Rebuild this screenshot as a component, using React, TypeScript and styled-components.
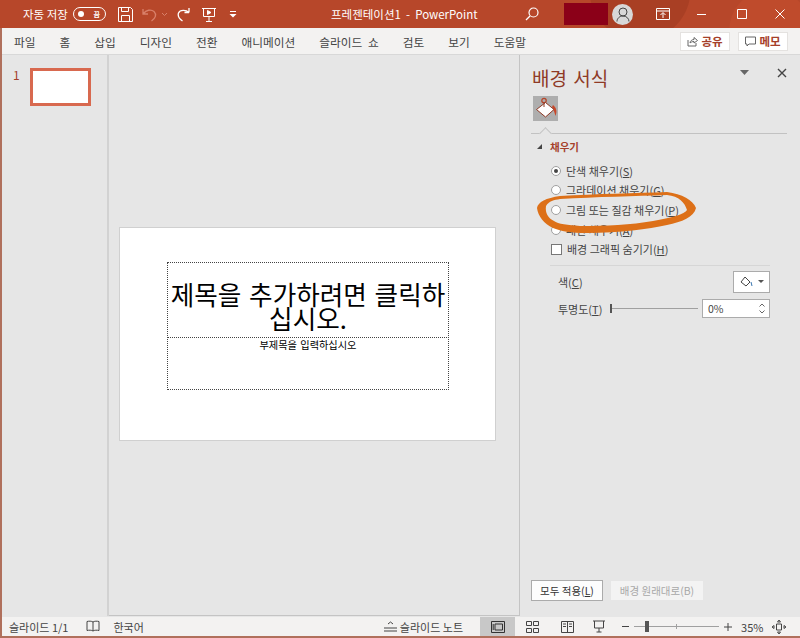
import styled, { createGlobalStyle } from "styled-components"

const Global = createGlobalStyle`
  html, body { margin: 0; padding: 0; background: #b0705c; }
  * { box-sizing: border-box; }
  body { font-family: "Noto Sans CJK KR", "Noto Sans", sans-serif; color: #444; }
  svg { display: block; }
`

const Window = styled.div`
  width: 800px;
  height: 638px;
  padding: 0 0 2px 2px;
  display: flex;
  flex-direction: column;
  position: relative;
  overflow: hidden;
  background: #b0705c;
`

const TitleBar = styled.div`
  height: 28px;
  margin-left: -2px;
  padding-left: 23px;
  display: flex;
  align-items: center;
  flex: none;
  color: #fff;
  background:
    radial-gradient(circle at 640px -10px, #a93f24 0 50px, transparent 51px),
    radial-gradient(circle at 770px 30px, #bf4b2c 0 40px, transparent 41px),
    #b7472a;
`

const AutoSave = styled.span`
  font-size: 11.5px;
  width: 50px;
  flex: none;
  white-space: nowrap;
`

const Toggle = styled.div`
  width: 33px;
  height: 14px;
  flex: none;
  border: 1px solid #fff;
  border-radius: 7px;
  display: flex;
  align-items: center;
  justify-content: space-between;
  padding: 0 5px 0 4px;
  font-size: 7px;
  font-weight: 700;
  margin-right: 12px;
  &::before {
    content: "";
    width: 6px;
    height: 6px;
    border-radius: 50%;
    background: #fff;
  }
`

const QuickIcon = styled.div<{ $gap: number; $left?: number }>`
  margin-right: ${p => p.$gap}px;
  margin-left: ${p => p.$left ?? 0}px;
  flex: none;
`

const DocTitle = styled.span`
  font-size: 11.5px;
  margin-left: 94px;
  width: 139px;
  white-space: pre;
  flex: none;
`

const Redacted = styled.div`
  width: 44px;
  height: 22px;
  background: #8b0018;
  margin: 0 4px 0 25px;
  flex: none;
`

const Avatar = styled.div`
  width: 21px;
  height: 21px;
  border-radius: 50%;
  background: #d8d8d8;
  display: flex;
  align-items: center;
  justify-content: center;
  margin-right: 23px;
  flex: none;
`

const TabBar = styled.div`
  height: 27px;
  flex: none;
  display: flex;
  align-items: center;
  padding: 0 12px 0 12px;
  background: #f3f2f1;
  border-bottom: 1px solid #d8d8d8;
`

const Tab = styled.span`
  font-size: 11.7px;
  word-spacing: 3px;
  color: #444;
  margin-right: 24px;
  white-space: pre;
`

const Spacer = styled.div`
  flex: 1;
`

const ShareButton = styled.div`
  height: 19px;
  width: 50px;
  background: #fff;
  border: 1px solid #e4e2e0;
  display: flex;
  align-items: center;
  justify-content: center;
  gap: 3px;
  margin-left: 8px;
  font-size: 11.5px;
  font-weight: 700;
  color: #a5402a;
`

const Main = styled.div`
  flex: 1;
  display: flex;
  min-height: 0;
  background: #e6e6e6;
`

const ThumbPane = styled.div`
  width: 107px;
  flex: none;
  padding: 13px 0 0 11px;
  display: flex;
  align-items: flex-start;
  gap: 9px;
  border-right: 2px solid #d2d2d2;
  margin-bottom: 1px;
`

const ThumbNumber = styled.span`
  font-size: 12px;
  line-height: 14px;
  color: #a5402a;
  width: 8px;
`

const Thumb = styled.div`
  width: 61px;
  height: 38px;
  background: #fff;
  border: 3px solid #d8694f;
`

const CanvasArea = styled.div`
  width: 411px;
  flex: none;
  padding: 172px 0 0 10px;
  border-bottom: 1px solid #c4c4c4;
  border-right: 1px solid #c4c4c4;
  margin-bottom: 1px;
`

const Slide = styled.div`
  width: 377px;
  height: 214px;
  background: #fff;
  border: 1px solid #d0d0d0;
  padding: 34px 46px 0 47px;
  color: #000;
`

const TitleHolder = styled.div`
  height: 76px;
  border: 1px dotted #444;
  padding-top: 19px;
  text-align: center;
  font-size: 25.6px;
  line-height: 24px;
  word-spacing: 2px;
  white-space: nowrap;
`

const SubHolder = styled.div`
  height: 53px;
  margin-top: -1px;
  border: 1px dotted #444;
  text-align: center;
  font-size: 10.2px;
  word-spacing: 1px;
  line-height: 13px;
`

const Panel = styled.div`
  flex: 1;
  padding: 9px 13px 0 12px;
  display: flex;
  flex-direction: column;
  align-items: flex-start;
`

const PanelHead = styled.div`
  width: 100%;
  height: 27px;
  display: flex;
  align-items: center;
`

const PanelTitle = styled.span`
  font-size: 19px;
  word-spacing: 2px;
  color: #8f3a26;
  flex: 1;
`

const HeadIcon = styled.div<{ $left: number }>`
  margin: -10px 0 0 ${p => p.$left}px;
  flex: none;
`

const TileRow = styled.div`
  width: 256px;
  height: 43px;
  margin-left: -1px;
  padding: 5px 0 0 2px;
  border-bottom: 1px solid #c2c2c2;
  position: relative;
  &::after {
    content: "";
    position: absolute;
    left: 10px;
    bottom: -5px;
    width: 8px;
    height: 8px;
    background: #e6e6e6;
    border-left: 1px solid #c2c2c2;
    border-top: 1px solid #c2c2c2;
    transform: rotate(45deg);
  }
`

const Tile = styled.div`
  width: 25px;
  height: 25px;
  background: #aeaeae;
`

const SectionHead = styled.div`
  display: flex;
  align-items: center;
  gap: 8px;
  margin: 3px 0 6px 5px;
  height: 18px;
  font-size: 10.5px;
  font-weight: 700;
  color: #a5402a;
  &::before {
    content: "";
    border-style: solid;
    border-width: 0 0 5px 5px;
    border-color: transparent transparent #444 transparent;
  }
`

const Option = styled.div`
  height: 19.6px;
  display: flex;
  align-items: center;
  gap: 5px;
  padding-left: 19px;
  font-size: 11px;
  color: #444;
  white-space: pre;
  u { text-decoration: underline; }
`

const Radio = styled.span<{ $on?: boolean }>`
  width: 10px;
  height: 10px;
  flex: none;
  border-radius: 50%;
  background: #fff;
  border: 1px solid #a0a0a0;
  display: flex;
  align-items: center;
  justify-content: center;
  &::after {
    content: "";
    width: 4px;
    height: 4px;
    border-radius: 50%;
    background: ${p => (p.$on ? "#444" : "transparent")};
  }
`

const Check = styled.span`
  width: 11px;
  height: 11px;
  flex: none;
  background: #fff;
  border: 1px solid #777;
`

const Divider = styled.div`
  width: 220px;
  margin: 6px 0 4px 18px;
  border-top: 1px solid #d6d6d6;
`

const FieldRow = styled.div`
  width: 238px;
  height: 24px;
  margin-bottom: 3px;
  padding-left: 26px;
  display: flex;
  align-items: center;
  font-size: 11px;
  color: #444;
  u { text-decoration: underline; }
`

const FieldLabel = styled.span`
  width: 43px;
  flex: none;
  white-space: nowrap;
`

const ColorButton = styled.div`
  width: 37px;
  height: 22px;
  margin-left: auto;
  background: #fff;
  border: 1px solid #ababab;
  display: flex;
  align-items: center;
  justify-content: center;
  gap: 5px;
`

const Caret = styled.span`
  border-style: solid;
  border-width: 3px 3px 0;
  border-color: #555 transparent transparent;
`

const SliderTrack = styled.div`
  width: 88px;
  height: 9px;
  margin-left: 9px;
  flex: none;
  display: flex;
  align-items: center;
  border-left: 2px solid #555;
  &::after {
    content: "";
    flex: 1;
    border-top: 1px solid #a0a0a0;
  }
`

const NumberBox = styled.div`
  width: 68px;
  height: 19px;
  margin-left: 4px;
  flex: none;
  background: #fff;
  border: 1px solid #ababab;
  padding: 0 4px 0 5px;
  display: flex;
  align-items: center;
  justify-content: space-between;
  font-size: 10.5px;
`

const Steppers = styled.div`
  display: flex;
  flex-direction: column;
  gap: 3px;
`

const PanelFoot = styled.div`
  margin: auto 0 16px -1px;
  display: flex;
  align-items: center;
  gap: 8px;
  font-size: 10.5px;
  u { text-decoration: underline; }
`

const ApplyButton = styled.div`
  width: 72px;
  height: 21px;
  background: #fdfdfd;
  border: 1px solid #ababab;
  display: flex;
  align-items: center;
  justify-content: center;
  color: #333;
  white-space: pre;
`

const ResetButton = styled.div`
  width: 92px;
  height: 19px;
  background: #f3f3f3;
  display: flex;
  align-items: center;
  justify-content: center;
  color: #a8a8a8;
`

const Annotation = styled.svg`
  position: absolute;
  left: 536px;
  top: 188px;
  pointer-events: none;
`

const StatusBar = styled.div`
  height: 19px;
  flex: none;
  display: flex;
  align-items: center;
  padding-left: 7px;
  background: #f3f2f1;
  font-size: 11px;
  color: #444;
`

const StatusText = styled.span<{ $gap: number; $left?: number }>`
  margin-right: ${p => p.$gap}px;
  margin-left: ${p => p.$left ?? 0}px;
  white-space: pre;
  flex: none;
`

const StatusIcon = styled.div<{ $gap?: number; $left?: number }>`
  margin-right: ${p => p.$gap ?? 0}px;
  margin-left: ${p => p.$left ?? 0}px;
  flex: none;
`

const ViewButton = styled.div<{ $on?: boolean }>`
  width: 35px;
  height: 19px;
  flex: none;
  display: flex;
  align-items: center;
  justify-content: center;
  background: ${p => (p.$on ? "#c8c8c8" : "transparent")};
`

const Zoom = styled.div`
  width: 85px;
  height: 11px;
  margin: 0 5px;
  position: relative;
  display: flex;
  align-items: center;
  flex: none;
  &::before {
    content: "";
    flex: 1;
    border-top: 1px solid #a0a0a0;
  }
  &::after {
    content: "";
    position: absolute;
    left: 42px;
    top: 3px;
    height: 5px;
    border-left: 1px solid #a0a0a0;
  }
`

const ZoomThumb = styled.span`
  position: absolute;
  left: 11px;
  top: 0;
  width: 4px;
  height: 11px;
  background: #555;
`

const tabs = ["파일", "홈", "삽입", "디자인", "전환", "애니메이션", "슬라이드 쇼", "검토", "보기", "도움말"]

const W = "#fff"
const S = "#444"

const BucketIcon = () => (
  <svg width="25" height="25" viewBox="0 0 25 25" fill="none">
    <circle cx="11" cy="4.500" r="2.200" stroke="#b5472c" strokeWidth="1.300" />
    <path d="M20 9C24 12 24 16 22.500 20C21.500 17 21 14 19 11Z" fill="#c8472a" />
    <path d="M12.500 6.500L21 13.500L12.500 21L3.500 13.500Z" fill="#fff" stroke="#8f3a26" />
    <path d="M11 6.500V11" stroke="#8f3a26" />
  </svg>
)

export default function App() {
  return (
    <Window>
      <Global />
      <TitleBar>
        <AutoSave>자동 저장</AutoSave>
        <Toggle>끔</Toggle>
        <QuickIcon $gap={9}>
          <svg width="15" height="15" viewBox="0 0 15 15" fill="none" stroke={W}>
            <path d="M.5.5h12l2 2v12H.5z" />
            <path d="M3.500.5v4h7v-4M3.500 14.500v-6h8v6" />
          </svg>
        </QuickIcon>
        <QuickIcon $gap={2}>
          <svg width="17" height="15" viewBox="0 0 17 15" fill="none" stroke="#d9806a" strokeWidth="1.300">
            <path d="M1 2v5h5M1.500 6.500C4 3 9 2 12 4.500c3 3 1.500 7-2.500 9.500" />
          </svg>
        </QuickIcon>
        <QuickIcon $gap={9}>
          <svg width="7" height="5" viewBox="0 0 7 5" fill="none" stroke="#d9806a">
            <path d="M1 1l2.500 2.500L6 1" />
          </svg>
        </QuickIcon>
        <QuickIcon $gap={12}>
          <svg width="13" height="15" viewBox="0 0 13 15" fill="none" stroke={W} strokeWidth="1.300">
            <path d="M12 5.500H7.500M12 5.500V1M12 5.500C9 2.500 3 2.500 1.500 6c-1 3 1 6 4 8" />
          </svg>
        </QuickIcon>
        <QuickIcon $gap={13}>
          <svg width="14" height="15" viewBox="0 0 14 15" fill="none" stroke={W}>
            <path d="M0 1.500h14M1.500 1.500v8h11v-8M7 9.500v5M4 14.500h6" />
            <path d="M5.500 3.500l3.500 2-3.500 2z" fill={W} />
          </svg>
        </QuickIcon>
        <QuickIcon $gap={0}>
          <svg width="8" height="7" viewBox="0 0 8 7" fill={W}>
            <path d="M1 0h6v1H1zM0.500 3h7L4 6.500z" />
          </svg>
        </QuickIcon>
        <DocTitle>프레젠테이션1  -  PowerPoint</DocTitle>
        <QuickIcon $gap={0} $left={55}>
          <svg width="14" height="14" viewBox="0 0 14 14" fill="none" stroke={W} strokeWidth="1.200">
            <circle cx="8.500" cy="5.500" r="4.500" />
            <path d="M5 9l-4 4" />
          </svg>
        </QuickIcon>
        <Redacted />
        <Avatar>
          <svg width="14" height="15" viewBox="0 0 14 15" fill="none" stroke="#444">
            <circle cx="7" cy="5" r="4" />
            <path d="M1 14.500c0-3 2.500-5.500 6-5.500s6 2.500 6 5.500" />
          </svg>
        </Avatar>
        <QuickIcon $gap={27}>
          <svg width="14" height="12" viewBox="0 0 14 12" fill="none" stroke={W}>
            <path d="M.5.500h13v11H.5zM.5 3h13" />
            <path d="M7 10V5M4.500 7L7 4.500 9.500 7" />
          </svg>
        </QuickIcon>
        <QuickIcon $gap={30}>
          <svg width="10" height="10" viewBox="0 0 10 10" stroke={W}>
            <path d="M0 5.500h9" />
          </svg>
        </QuickIcon>
        <QuickIcon $gap={28}>
          <svg width="10" height="10" viewBox="0 0 10 10" fill="none" stroke={W}>
            <path d="M.5.500h9v9h-9z" />
          </svg>
        </QuickIcon>
        <QuickIcon $gap={0}>
          <svg width="10" height="10" viewBox="0 0 10 10" stroke={W}>
            <path d="M.5.500l9 9M9.500.500l-9 9" />
          </svg>
        </QuickIcon>
      </TitleBar>

      <TabBar>
        {tabs.map(t => (
          <Tab key={t}>{t}</Tab>
        ))}
        <Spacer />
        <ShareButton>
          <svg width="11" height="11" viewBox="0 0 11 11" fill="none" stroke="#666">
            <path d="M1 4v6h8V7M3 7c0-2 2-3.500 4-3.500V1.500l3.500 3L7 7V5.500C5.500 5.500 4 6 3 7z" />
          </svg>
          공유
        </ShareButton>
        <ShareButton>
          <svg width="11" height="11" viewBox="0 0 11 11" fill="none" stroke="#666">
            <path d="M.5 1h10v7H4L2 10V8H.5z" />
          </svg>
          메모
        </ShareButton>
      </TabBar>

      <Main>
        <ThumbPane>
          <ThumbNumber>1</ThumbNumber>
          <Thumb />
        </ThumbPane>
        <CanvasArea>
          <Slide>
            <TitleHolder>
              제목을 추가하려면 클릭하
              <br />
              십시오.
            </TitleHolder>
            <SubHolder>부제목을 입력하십시오</SubHolder>
          </Slide>
        </CanvasArea>
        <Panel>
          <PanelHead>
            <PanelTitle>배경 서식</PanelTitle>
            <HeadIcon $left={0}>
              <svg width="9" height="5" viewBox="0 0 9 5" fill="#666">
                <path d="M0 0h9L4.500 5z" />
              </svg>
            </HeadIcon>
            <HeadIcon $left={28}>
              <svg width="10" height="10" viewBox="0 0 10 10" stroke={S} strokeWidth="1.400">
                <path d="M1 1l8 8M9 1l-8 8" />
              </svg>
            </HeadIcon>
          </PanelHead>
          <TileRow>
            <Tile>
              <BucketIcon />
            </Tile>
          </TileRow>
          <SectionHead>채우기</SectionHead>
          <Option>
            <Radio $on />
            <span>단색 채우기(<u>S</u>)</span>
          </Option>
          <Option>
            <Radio />
            <span>그라데이션 채우기(<u>G</u>)</span>
          </Option>
          <Option>
            <Radio />
            <span>그림 또는 질감 채우기(<u>P</u>)</span>
          </Option>
          <Option>
            <Radio />
            <span>패턴 채우기(<u>A</u>)</span>
          </Option>
          <Option>
            <Check />
            <span>배경 그래픽 숨기기(<u>H</u>)</span>
          </Option>
          <Divider />
          <FieldRow>
            <FieldLabel>색(<u>C</u>)</FieldLabel>
            <ColorButton>
              <svg width="13" height="12" viewBox="0 0 13 12" fill="none" stroke="#444">
                <path d="M5 1l5 5-4 4-5-4z" />
                <path d="M11 6l1 4" stroke="#3a76b0" />
              </svg>
              <Caret />
            </ColorButton>
          </FieldRow>
          <FieldRow>
            <FieldLabel>투명도(<u>T</u>)</FieldLabel>
            <SliderTrack />
            <NumberBox>
              0%
              <Steppers>
                <svg width="6" height="4" viewBox="0 0 6 4" fill="none" stroke="#666">
                  <path d="M.5 3.500L3 1l2.500 2.500" />
                </svg>
                <svg width="6" height="4" viewBox="0 0 6 4" fill="none" stroke="#666">
                  <path d="M.5.500L3 3 5.500.500" />
                </svg>
              </Steppers>
            </NumberBox>
          </FieldRow>
          <PanelFoot>
            <ApplyButton>
              <span>모두 적용(<u>L</u>)</span>
            </ApplyButton>
            <ResetButton>배경 원래대로(B)</ResetButton>
          </PanelFoot>
        </Panel>
      </Main>

      <StatusBar>
        <StatusText $gap={18}>슬라이드 1/1</StatusText>
        <StatusIcon $gap={13}>
          <svg width="14" height="13" viewBox="0 0 14 13" fill="none" stroke={S}>
            <path d="M7 2C5.500 1 3 1 1 1.500v9C3 10 5.500 10 7 11c1.500-1 4-1 6-.5v-9C11 1 8.500 1 7 2zM7 2v9" />
          </svg>
        </StatusIcon>
        <StatusText $gap={240}>한국어</StatusText>
        <StatusIcon $gap={3}>
          <svg width="13" height="11" viewBox="0 0 13 11" fill="none" stroke={S}>
            <path d="M0 7h13M0 10h13M4 3l2.500-2L9 3" />
          </svg>
        </StatusIcon>
        <StatusText $gap={17}>슬라이드 노트</StatusText>
        <ViewButton $on>
          <svg width="14" height="12" viewBox="0 0 14 12" fill="none" stroke="#333">
            <path d="M.5.500h13v11H.5zM4 3h7.500v6H4z" />
            <path d="M2.200 3v6" />
          </svg>
        </ViewButton>
        <ViewButton>
          <svg width="13" height="12" viewBox="0 0 13 12" fill="none" stroke={S}>
            <path d="M.5.500h5v4h-5zM7.500.500h5v4h-5zM.5 7.500h5v4h-5zM7.500 7.500h5v4h-5z" />
          </svg>
        </ViewButton>
        <ViewButton>
          <svg width="13" height="12" viewBox="0 0 13 12" fill="none" stroke={S}>
            <path d="M.5.500h12v11H.5zM6.500.500v11M2 3h3M2 5.500h3M8 3h3M8 5.500h3" />
          </svg>
        </ViewButton>
        <StatusIcon $left={8} $gap={17}>
          <svg width="12" height="13" viewBox="0 0 12 13" fill="none" stroke={S}>
            <path d="M0 1h12M1.500 1v7h9V1M6 8v4M3.500 12h5" />
          </svg>
        </StatusIcon>
        <StatusIcon>
          <svg width="7" height="3" viewBox="0 0 7 3" stroke={S}>
            <path d="M0 1.500h7" />
          </svg>
        </StatusIcon>
        <Zoom>
          <ZoomThumb />
        </Zoom>
        <StatusIcon>
          <svg width="8" height="8" viewBox="0 0 8 8" stroke={S}>
            <path d="M0 4h8M4 0v8" />
          </svg>
        </StatusIcon>
        <StatusText $gap={9} $left={9}>
          35%
        </StatusText>
        <StatusIcon>
          <svg width="14" height="14" viewBox="0 0 14 14" fill="none" stroke={S}>
            <path d="M4.500 4h5v6h-5zM7 0L5.500 2h3zM7 14l-1.500-2h3zM0 7l2-1.500v3zM14 7l-2-1.500v3z" />
          </svg>
        </StatusIcon>
      </StatusBar>

      <Annotation width="164" height="50" viewBox="0 0 164 50">
        <path
          fill="#dd7018"
          fillRule="evenodd"
          d="M131 4C146 6 157 12 160 20C158 29 146 34 131 37C112 41 85 45 51 45C35 45 24 43 17 40C8 36 2 28 1 20C2 14 10 10 24 8C60 6 100 5 131 4ZM131 7C143 8 149 15 151 22C149 26 135 30 117 33C95 37 70 38 44 38C32 37 22 36 18 33C12 30 9 25 10 18C13 13 18 12 24 11C60 9 100 8 131 7Z"
        />
      </Annotation>
    </Window>
  )
}
